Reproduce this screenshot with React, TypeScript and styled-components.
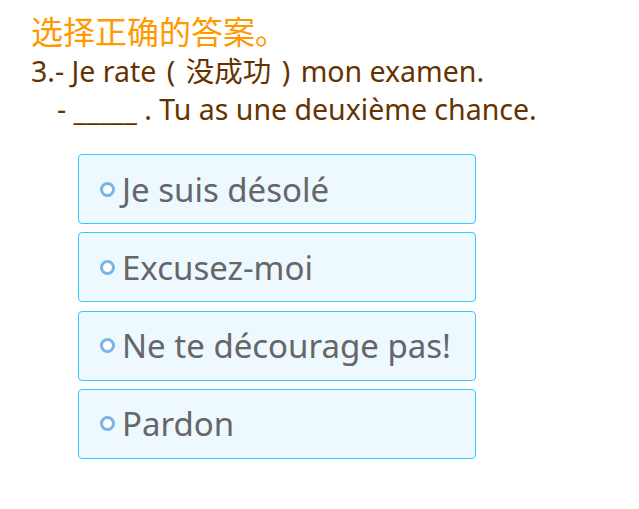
import React from "react";
import styled, { createGlobalStyle } from "styled-components";

const Global = createGlobalStyle`
  html, body { margin: 0; padding: 0; background: #ffffff; }
  body { font-family: "Noto Sans", "Noto Sans CJK SC", sans-serif; }
`;

const Page = styled.div`
  padding: 10px 0 0 31px;
  display: flex;
  flex-direction: column;
`;

const Title = styled.div`
  color: #ff9900;
  font-size: 32px;
  line-height: 40px;
  font-family: "Noto Sans CJK SC", sans-serif;
`;

const QuestionLine = styled.div<{ $indent?: number; $top?: number }>`
  color: #663300;
  font-size: 28.5px;
  line-height: 37px;
  margin-top: ${(p) => p.$top ?? 0}px;
  padding-left: ${(p) => p.$indent ?? 0}px;
  white-space: pre;
`;

const Paren = styled.span`
  padding: 0 3px;
`;

const Options = styled.div`
  margin: 26px 0 0 47px;
  display: flex;
  flex-direction: column;
  gap: 8.3px;
  width: 398px;
`;

const Option = styled.label`
  box-sizing: border-box;
  height: 70px;
  border: 1px solid #33ccff;
  border-radius: 4px;
  background: #eef8ff;
  display: flex;
  align-items: center;
  padding-left: 21px;
  gap: 7px;
  color: #666666;
  font-size: 33px;
  cursor: pointer;
`;

const Radio = styled.span`
  box-sizing: border-box;
  width: 15px;
  height: 15px;
  border-radius: 50%;
  border: 3px solid #7ab4e6;
  background: #ffffff;
  flex: none;
`;

const options = ["Je suis désolé", "Excusez-moi", "Ne te décourage pas!", "Pardon"];

export default function App() {
  return (
    <>
      <Global />
      <Page>
        <Title>选择正确的答案。</Title>
        <QuestionLine $top={3}>
          3.- Je rate <Paren>(</Paren> 没成功 <Paren>)</Paren> mon examen.
        </QuestionLine>
        <QuestionLine $indent={26} $top={1}>
          - _____ . Tu as une deuxième chance.
        </QuestionLine>
        <Options>
          {options.map((o) => (
            <Option key={o}>
              <Radio />
              {o}
            </Option>
          ))}
        </Options>
      </Page>
    </>
  );
}
